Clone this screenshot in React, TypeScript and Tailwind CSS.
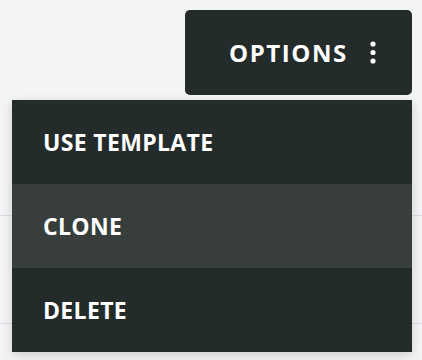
const items = ['USE TEMPLATE', 'CLONE', 'DELETE'];

function DotsIcon() {
  return (
    <svg width="6" height="23" viewBox="0 0 6 23" className="shrink-0">
      <circle cx="3" cy="3" r="2.6" fill="#ffffff" />
      <circle cx="3" cy="11.5" r="2.6" fill="#ffffff" />
      <circle cx="3" cy="20" r="2.6" fill="#ffffff" />
    </svg>
  );
}

export default function App() {
  return (
    <div
      className="relative w-[422px] h-[360px] overflow-hidden bg-[#f3f4f6]"
      style={{ fontFamily: '"Open Sans", "Liberation Sans", sans-serif' }}
    >
      <div className="flex justify-end pt-[10px] pr-[10px]">
        <button className="flex items-center w-[227px] h-[85px] pl-[44px] rounded-[5px] bg-[#242b2b] text-white">
          <span className="text-[24px] font-bold tracking-[0.065em] leading-none">OPTIONS</span>
          <span className="ml-[22px]">
            <DotsIcon />
          </span>
        </button>
      </div>

      <div className="mt-[120px] border-t border-[#dcdee1]" />
      <div className="mt-[107px] border-t border-[#dcdee1]" />

      <div className="absolute left-[12px] top-[100px] w-[400px] bg-[#242b2b] shadow-[0_3px_10px_rgba(0,0,0,0.16)]">
        {items.map((label) => (
          <div
            key={label}
            className={`flex items-center h-[84px] px-[31px] text-white text-[23px] font-bold tracking-[0.015em] ${
              label === 'CLONE' ? 'bg-[#383e3c]' : ''
            }`}
          >
            {label}
          </div>
        ))}
      </div>
    </div>
  );
}
